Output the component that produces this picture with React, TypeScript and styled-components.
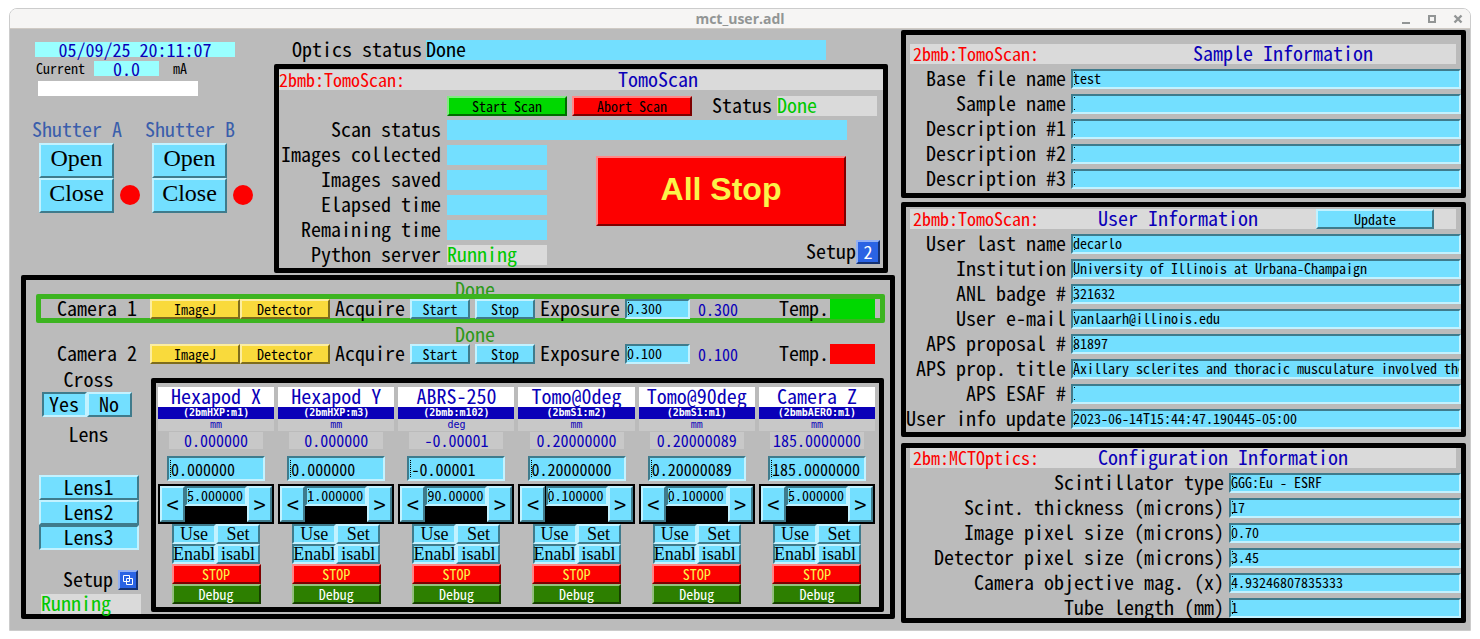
import React from "react";
import styled, { createGlobalStyle, css } from "styled-components";

const color = {
  face: "#bbbbbb",
  cyan: "#73dfff",
  cyanLight: "#c3f2ff",
  cyanDark: "#3f7b8c",
  pale: "#99ffff",
  bar: "#dadada",
  soft: "#c8c8c8",
  navy: "#0a00b8",
  red: "#fd0000",
  green: "#00d800",
  ok: "#00c800",
};

const mono = `"Noto Sans Mono CJK SC", "DejaVu Sans Mono", monospace`;

const GlobalStyle = createGlobalStyle`
  *, *::before, *::after { box-sizing: border-box; }
  body { margin: 0; background: #ffffff; font-family: ${mono}; font-size: 20px; line-height: 18px; color: #000000; }
  button, input, output { font: inherit; color: inherit; margin: 0; }
`;

/* ---------- window frame ---------- */

const Window = styled.div`
  margin: 8px 9px 9px;
  border: 1px solid #cccccc;
  border-radius: 8px 8px 0 0;
  overflow: hidden;
`;

const TitleBar = styled.header`
  display: grid;
  grid-template-columns: 1fr auto 1fr;
  align-items: center;
  height: 20px;
  background: #f6f5f4;
  border-bottom: 1px solid #cfcac4;
`;

const WindowTitle = styled.h1`
  grid-column: 2;
  margin: 0;
  font: bold 14px/18px "Open Sans", sans-serif;
  color: #929595;
`;

const WindowButtons = styled.div`
  display: flex;
  justify-content: flex-end;
  gap: 10px;
  padding-right: 4px;
`;

const WindowButton = styled.button`
  display: flex;
  width: 16px;
  height: 16px;
  padding: 0;
  border: 0;
  background: none;
`;

const Screen = styled.main`
  display: grid;
  grid-template-columns: 885fr 565fr;
  column-gap: 6px;
  padding: 0 4px 7px 0;
  background: ${color.face};
`;

/* ---------- shared parts ---------- */

const raised = (light: string, dark: string) => css`
  border-style: solid;
  border-width: 2px;
  border-color: ${light} ${dark} ${dark} ${light};
`;

const Panel = styled.section`
  border: 5px solid #000000;
  border-radius: 2px;
`;

const tones = {
  cyan: { bg: color.cyan, light: color.cyanLight, dark: color.cyanDark, ink: "#000000" },
  green: { bg: color.green, light: "#80ec80", dark: "#006c00", ink: "#000000" },
  red: { bg: color.red, light: "#ff8888", dark: "#7e0000", ink: "#000000" },
  stop: { bg: color.red, light: "#ff8888", dark: "#7e0000", ink: "#fbf34a" },
  yellow: { bg: "#f9da3c", light: "#fceda0", dark: "#7e6c1c", ink: "#000000" },
  blue: { bg: "#2a63e4", light: "#93b0f2", dark: "#153172", ink: "#ffffff" },
  debug: { bg: "#2d7f00", light: "#96bf80", dark: "#163f00", ink: "#ffffff" },
};

const Button = styled.button<{ $tone?: keyof typeof tones; $w?: number; $h?: number; $size?: number; $down?: boolean }>`
  display: flex;
  align-items: center;
  justify-content: center;
  flex: none;
  padding: 0;
  white-space: nowrap;
  width: ${(p) => (p.$w ? `${p.$w}px` : "100%")};
  height: ${(p) => p.$h ?? 20}px;
  font-size: ${(p) => p.$size ?? 14}px;
  line-height: 16px;
  ${(p) => {
    const t = tones[p.$tone ?? "cyan"];
    return css`
      background: ${t.bg};
      color: ${t.ink};
      ${p.$down ? raised(t.dark, t.light) : raised(t.light, t.dark)}
    `;
  }}
`;

const TallButton = styled(Button)`
  padding-bottom: 2px;
`;

const SerifButton = styled(Button)`
  padding-bottom: 4px;
  font-family: "Liberation Serif", serif;
  line-height: 27px;
`;

const AllStop = styled(Button)`
  padding-bottom: 4px;
  font-family: "Liberation Sans", sans-serif;
  font-weight: bold;
  line-height: 36px;
`;

const Entry = styled.input<{ $w?: number; $big?: boolean }>`
  flex: ${(p) => (p.$w ? "none" : "1")};
  width: ${(p) => (p.$w ? `${p.$w}px` : "auto")};
  min-width: 0;
  height: ${(p) => (p.$big ? 25 : 20)}px;
  padding: 0 0 ${(p) => (p.$big ? 0 : 2)}px ${(p) => (p.$big ? 2 : 0)}px;
  font-size: ${(p) => (p.$big ? 16 : 14)}px;
  color: #000000;
  border-radius: 0;
  outline: none;
  background-color: ${color.cyan};
  background-repeat: no-repeat;
  background-image: ${(p) =>
    p.$big
      ? "repeating-linear-gradient(#000 0 1px, transparent 1px 2px)"
      : "linear-gradient(#000, #000), linear-gradient(#000, #000)"};
  background-size: ${(p) => (p.$big ? "1px 17px" : "1px 1px, 1px 1px")};
  background-position: ${(p) => (p.$big ? "1px 2px" : "1px 1px, 1px 13px")};
  ${raised(color.cyanDark, color.cyanLight)}
`;

const Readout = styled.output<{ $w?: number; $bg?: string; $ink?: string }>`
  display: block;
  flex: none;
  width: ${(p) => p.$w ?? 100}px;
  height: 20px;
  white-space: nowrap;
  background: ${(p) => p.$bg ?? color.cyan};
  color: ${(p) => p.$ink ?? "#000000"};
`;

const Caption = styled.span`
  display: block;
  height: 20px;
  white-space: nowrap;
`;

const Heading = styled.div<{ $lead: number }>`
  display: grid;
  grid-template-columns: ${(p) => p.$lead}px 1fr auto;
  height: 20px;
  color: ${color.navy};
  background: ${color.bar};
`;

const HeadingText = styled.h2`
  margin: 0;
  font: inherit;
`;

const Prefix = styled.span`
  font-size: 18px;
  color: ${color.red};
`;

/* ---------- beam status and shutters ---------- */

const LeftSide = styled.div`
  min-width: 0;
`;

const TopRow = styled.div`
  display: flex;
`;

const BeamStatus = styled.section`
  flex: none;
  width: 264px;
  padding: 13px 0 0 25px;
`;

const PaleReadout = styled.output<{ $w: number }>`
  width: ${(p) => p.$w}px;
  height: 15px;
  font-size: 18px;
  line-height: 14px;
  text-align: center;
  color: ${color.navy};
  background: ${color.pale};
`;

const CurrentRow = styled.div`
  display: grid;
  grid-template-columns: 58px 65px auto;
  height: 15px;
  margin: 4px 0 5px 1px;
  font-size: 14px;
  line-height: 15px;
`;

const Unit = styled.span`
  padding-left: 14px;
`;

const BeamLevel = styled.div`
  width: 160px;
  height: 15px;
  margin-left: 3px;
  background: #ffffff;
`;

const Clock = styled(PaleReadout)`
  display: block;
`;

const Shutters = styled.div`
  display: flex;
  margin-top: 24px;
`;

const Shutter = styled.div`
  width: 113px;
  margin-left: -3px;
  margin-right: 3px;
  color: #3a5eab;
`;

const ShutterBody = styled.div`
  display: flex;
  align-items: flex-end;
  gap: 6px;
  padding: 3px 0 0 7px;
`;

const Lamp = styled.span`
  width: 20px;
  height: 20px;
  margin-bottom: 8px;
  border-radius: 50%;
  background: ${color.red};
`;

/* ---------- scan control ---------- */

const ScanSide = styled.div`
  flex: 1;
  min-width: 0;
  padding: 11px 7px 0 0;
`;

const OpticsRow = styled.div`
  display: flex;
  gap: 4px;
  padding-left: 18px;
  margin-bottom: 4px;
`;

const ScanPanel = styled(Panel)`
  height: 209px;
  padding-top: 1px;
`;

const ScanActions = styled.div`
  display: flex;
  align-items: center;
  gap: 5px;
  margin: 6px 0 4px 168px;
`;

const StatusCaption = styled(Caption)`
  margin-left: 15px;
`;

const ScanRow = styled.div`
  display: grid;
  grid-template-columns: 162px auto;
  justify-content: start;
  column-gap: 6px;
  text-align: right;
`;

const ScanRows = styled.div`
  display: grid;
  gap: 5px;
`;

const ScanBody = styled.div`
  display: flex;
  justify-content: space-between;
  padding-right: 3px;
  margin-top: 5px;
`;

const StopSide = styled.div`
  display: flex;
  flex-direction: column;
  gap: 14px;
  padding-top: 11px;
`;

const SetupRow = styled.div`
  display: flex;
  justify-content: flex-end;
  align-items: center;
`;

const LeftReadout = styled(Readout)`
  text-align: left;
`;

const StopWrap = styled.div`
  padding-right: 34px;
`;

/* ---------- cameras ---------- */

const CameraPanel = styled(Panel)`
  margin: 2px 0 0 11px;
  height: 344px;
`;

const CameraState = styled.div`
  height: 14px;
  padding-left: 429px;
  color: #2d991a;
`;

const CameraRow = styled.div<{ $active?: boolean }>`
  position: relative;
  display: flex;
  align-items: center;
  height: 29px;
  margin: 0 5px 2px 10px;
  padding: 0 5px 0 16px;
  border: 5px solid ${(p) => (p.$active ? "#3cb420" : "transparent")};
  border-radius: 2px;
`;

const CameraName = styled(Caption)`
  width: 93px;
`;

const Gap = styled.div`
  display: flex;
  gap: 5px;
  margin: 0 5px;
`;

const ExposureLabel = styled.label`
  height: 20px;
  margin-right: 5px;
`;

const Narrow = styled.output`
  flex: 1;
  padding-left: 8px;
  font-size: 16px;
  color: ${color.navy};
`;

const TempLamp = styled.span<{ $ok?: boolean }>`
  width: 45px;
  height: 20px;
  margin-left: 1px;
  background: ${(p) => (p.$ok ? color.green : color.red)};
`;

const Lower = styled.div`
  display: grid;
  grid-template-columns: 125px 1fr;
  padding-right: 6px;
`;

const Side = styled.div`
  display: flex;
  flex-direction: column;
  align-items: center;
`;

const YesNo = styled.div`
  display: flex;
  margin: 2px 4px 8px 0;
`;

const LensList = styled.div`
  width: 100px;
  margin: 30px 0 20px;
`;

const SideSetup = styled.div`
  display: flex;
  gap: 5px;
  margin: 0 0 4px 24px;
`;

const SideState = styled(Readout)`
  margin-left: 5px;
`;

/* ---------- motors ---------- */

const MotorPanel = styled(Panel)`
  display: grid;
  grid-template-columns: repeat(6, minmax(0, 1fr));
  column-gap: 4px;
  height: 234px;
  margin-top: 8px;
  padding: 4px 4px 0 2px;
`;

const Motor = styled.div`
  display: flex;
  flex-direction: column;
  align-items: center;
  color: ${color.navy};
`;

const MotorName = styled.h3`
  width: 100%;
  height: 20px;
  margin: 0;
  font: inherit;
  text-align: center;
  background: #ffffff;
`;

const MotorTag = styled.div<{ $plain?: boolean }>`
  width: 100%;
  height: 12px;
  font: ${(p) => (p.$plain ? "normal" : "bold")} 10px/12px "DejaVu Sans Mono", monospace;
  text-align: center;
  color: ${(p) => (p.$plain ? color.navy : "#ffffff")};
  background: ${(p) => (p.$plain ? color.soft : color.navy)};
`;

const MotorValue = styled.output`
  width: 94px;
  height: 17px;
  margin: 1px 0 7px;
  font-size: 16px;
  line-height: 16px;
  text-align: center;
  background: ${color.soft};
`;

const Tweak = styled.div`
  display: flex;
  justify-content: space-between;
  width: 100%;
  height: 40px;
  margin-top: 3px;
  padding: 2px;
  background: #000000;
`;

const MotorKeys = styled.div`
  display: grid;
  grid-template-columns: 44px 44px;
  width: 88px;
`;

const MotorKey = styled(Button)`
  font-family: "Liberation Serif", serif;
`;

/* ---------- information forms ---------- */

const RightSide = styled.div`
  min-width: 0;
  padding-top: 1px;
`;

const InfoPanel = styled(Panel)<{ $top: number; $bottom: number; $after: number }>`
  padding: ${(p) => p.$top}px 0 ${(p) => p.$bottom}px;
  margin-bottom: ${(p) => p.$after}px;
`;

const InfoHeading = styled(Heading)`
  margin: 0 5px 0 4px;
  padding: 0 22px 0 3px;
`;

const Fields = styled.div<{ $label: number }>`
  display: grid;
  gap: 5px;
  margin-top: 5px;
  --label: ${(p) => p.$label}px;
`;

const Field = styled.div`
  display: grid;
  grid-template-columns: var(--label) minmax(0, 1fr);
  column-gap: 5px;
`;

const FieldLabel = styled.label`
  height: 20px;
  text-align: right;
  white-space: nowrap;
`;

/* ---------- data ---------- */

const motors = [
  { name: "Hexapod X", pv: "(2bmHXP:m1)", unit: "mm", value: "0.000000", set: "0.000000", step: "5.000000" },
  { name: "Hexapod Y", pv: "(2bmHXP:m3)", unit: "mm", value: "0.000000", set: "0.000000", step: "1.000000" },
  { name: "ABRS-250", pv: "(2bmb:m102)", unit: "deg", value: "-0.00001", set: "-0.00001", step: "90.00000" },
  { name: "Tomo@0deg", pv: "(2bmS1:m2)", unit: "mm", value: "0.20000000", set: "0.20000000", step: "0.100000" },
  { name: "Tomo@90deg", pv: "(2bmS1:m1)", unit: "mm", value: "0.20000089", set: "0.20000089", step: "0.100000" },
  { name: "Camera Z", pv: "(2bmbAERO:m1)", unit: "mm", value: "185.0000000", set: "185.0000000", step: "5.000000" },
];

const sample: [string, string][] = [
  ["Base file name", "test"],
  ["Sample name", ""],
  ["Description #1", ""],
  ["Description #2", ""],
  ["Description #3", ""],
];

const user: [string, string][] = [
  ["User last name", "decarlo"],
  ["Institution", "University of Illinois at Urbana-Champaign"],
  ["ANL badge #", "321632"],
  ["User e-mail", "vanlaarh@illinois.edu"],
  ["APS proposal #", "81897"],
  ["APS prop. title", "Axillary sclerites and thoracic musculature involved the"],
  ["APS ESAF #", ""],
  ["User info update", "2023-06-14T15:44:47.190445-05:00"],
];

const config: [string, string][] = [
  ["Scintillator type", "GGG:Eu - ESRF"],
  ["Scint. thickness (microns)", "17"],
  ["Image pixel size (microns)", "0.70"],
  ["Detector pixel size (microns)", "3.45"],
  ["Camera objective mag. (x)", "4.93246807835333"],
  ["Tube length (mm)", "1"],
];

/* ---------- components ---------- */

function FieldList({ id, label, rows }: { id: string; label: number; rows: [string, string][] }) {
  return (
    <Fields $label={label}>
      {rows.map(([name, value], i) => (
        <Field key={name}>
          <FieldLabel htmlFor={`${id}-${i}`}>{name}</FieldLabel>
          <Entry id={`${id}-${i}`} defaultValue={value} spellCheck={false} />
        </Field>
      ))}
    </Fields>
  );
}

function ShutterControl({ name }: { name: string }) {
  return (
    <Shutter>
      <Caption>{name}</Caption>
      <ShutterBody>
        <div>
          <SerifButton $w={75} $h={35} $size={24}>Open</SerifButton>
          <SerifButton $w={75} $h={35} $size={24}>Close</SerifButton>
        </div>
        <Lamp />
      </ShutterBody>
    </Shutter>
  );
}

function Camera({ n, exposure, active }: { n: number; exposure: string; active?: boolean }) {
  return (
    <>
      <CameraState>Done</CameraState>
      <CameraRow $active={active}>
        <CameraName>Camera {n}</CameraName>
        <Button $tone="yellow" $w={90}>ImageJ</Button>
        <Button $tone="yellow" $w={90}>Detector</Button>
        <Gap>
          <Caption>Acquire</Caption>
          <Button $w={60}>Start</Button>
          <Button $w={60}>Stop</Button>
        </Gap>
        <ExposureLabel htmlFor={`exposure-${n}`}>Exposure</ExposureLabel>
        <Entry id={`exposure-${n}`} $w={65} defaultValue={exposure} />
        <Narrow>{exposure}</Narrow>
        <Caption>Temp.</Caption>
        <TempLamp $ok={active} />
      </CameraRow>
    </>
  );
}

function MotorColumn({ m }: { m: (typeof motors)[number] }) {
  return (
    <Motor>
      <MotorName>{m.name}</MotorName>
      <MotorTag>{m.pv}</MotorTag>
      <MotorTag $plain>{m.unit}</MotorTag>
      <MotorValue>{m.value}</MotorValue>
      <Entry $w={98} $big aria-label={`${m.name} position`} defaultValue={m.set} />
      <Tweak>
        <Button $w={25} $h={36} $size={24} aria-label={`${m.name} back`}>&lt;</Button>
        <Entry $w={62} aria-label={`${m.name} step`} defaultValue={m.step} />
        <Button $w={25} $h={36} $size={24} aria-label={`${m.name} forward`}>&gt;</Button>
      </Tweak>
      <MotorKeys>
        <MotorKey $size={18} $down>Use</MotorKey>
        <MotorKey $size={18}>Set</MotorKey>
        <MotorKey $size={18} $down>Enabl</MotorKey>
        <MotorKey $size={18}>isabl</MotorKey>
      </MotorKeys>
      <Button $tone="stop" $w={89}>STOP</Button>
      <Button $tone="debug" $w={89}>Debug</Button>
    </Motor>
  );
}

export default function App() {
  return (
    <>
      <GlobalStyle />
      <Window>
        <TitleBar>
          <WindowTitle>mct_user.adl</WindowTitle>
          <WindowButtons>
            <WindowButton aria-label="Minimize">
              <svg width="16" height="16" viewBox="0 0 16 16"><path d="M4 12h8" stroke="#929595" strokeWidth="2" /></svg>
            </WindowButton>
            <WindowButton aria-label="Maximize">
              <svg width="16" height="16" viewBox="0 0 16 16"><path d="M5 5h6v6h-6z" fill="none" stroke="#929595" strokeWidth="2" /></svg>
            </WindowButton>
            <WindowButton aria-label="Close">
              <svg width="16" height="16" viewBox="0 0 16 16"><path d="M4.500 4.500l7 7M11.500 4.500l-7 7" stroke="#929595" strokeWidth="2.400" /></svg>
            </WindowButton>
          </WindowButtons>
        </TitleBar>

        <Screen>
          <LeftSide>
            <TopRow>
              <BeamStatus>
                <Clock $w={200}>05/09/25 20:11:07</Clock>
                <CurrentRow>
                  <span>Current</span>
                  <PaleReadout $w={65}>0.0</PaleReadout>
                  <Unit>mA</Unit>
                </CurrentRow>
                <BeamLevel />
                <Shutters>
                  <ShutterControl name="Shutter A" />
                  <ShutterControl name="Shutter B" />
                </Shutters>
              </BeamStatus>

              <ScanSide>
                <OpticsRow>
                  <Caption>Optics status</Caption>
                  <Readout $w={400}>Done</Readout>
                </OpticsRow>
                <ScanPanel>
                  <Heading $lead={339}>
                    <Prefix>2bmb:TomoScan:</Prefix>
                    <HeadingText>TomoScan</HeadingText>
                  </Heading>
                  <ScanActions>
                    <Button $tone="green" $w={120}>Start Scan</Button>
                    <Button $tone="red" $w={120}>Abort Scan</Button>
                    <StatusCaption>Status</StatusCaption>
                    <Readout $bg={color.bar} $ink={color.ok}>Done</Readout>
                  </ScanActions>
                  <ScanRow>
                    <Caption>Scan status</Caption>
                    <Readout $w={400} />
                  </ScanRow>
                  <ScanBody>
                    <ScanRows>
                      {["Images collected", "Images saved", "Elapsed time", "Remaining time"].map((t) => (
                        <ScanRow key={t}>
                          <Caption>{t}</Caption>
                          <Readout />
                        </ScanRow>
                      ))}
                      <ScanRow>
                        <Caption>Python server</Caption>
                        <LeftReadout $bg={color.bar} $ink={color.ok}>Running</LeftReadout>
                      </ScanRow>
                    </ScanRows>
                    <StopSide>
                      <StopWrap>
                        <AllStop $tone="stop" $w={250} $h={70} $size={32}>All Stop</AllStop>
                      </StopWrap>
                      <SetupRow>
                        <Caption>Setup</Caption>
                        <TallButton $tone="blue" $w={24} $h={24} $size={18}>2</TallButton>
                      </SetupRow>
                    </StopSide>
                  </ScanBody>
                </ScanPanel>
              </ScanSide>
            </TopRow>

            <CameraPanel>
              <Camera n={1} exposure="0.300" active />
              <Camera n={2} exposure="0.100" />
              <Lower>
                <Side>
                  <Caption>Cross</Caption>
                  <YesNo>
                    <TallButton $w={45} $h={25} $size={20} $down aria-pressed>Yes</TallButton>
                    <TallButton $w={45} $h={25} $size={20}>No</TallButton>
                  </YesNo>
                  <Caption>Lens</Caption>
                  <LensList>
                    <TallButton $h={25} $size={20}>Lens1</TallButton>
                    <TallButton $h={25} $size={20}>Lens2</TallButton>
                    <TallButton $h={25} $size={20} $down aria-pressed>Lens3</TallButton>
                  </LensList>
                  <SideSetup>
                    <Caption>Setup</Caption>
                    <Button $tone="blue" $w={20} aria-label="Open optics setup">
                      <svg width="12" height="12" viewBox="0 0 12 12" fill="none" stroke="#ffffff" strokeWidth="1">
                        <path d="M1.500 1.500h6v6h-6z M4.500 4.500h6v6h-6z" />
                      </svg>
                    </Button>
                  </SideSetup>
                  <SideState $bg={color.bar} $ink={color.ok}>Running</SideState>
                </Side>
                <MotorPanel>
                  {motors.map((m) => (
                    <MotorColumn key={m.name} m={m} />
                  ))}
                </MotorPanel>
              </Lower>
            </CameraPanel>
          </LeftSide>

          <RightSide>
            <InfoPanel $top={9} $bottom={4} $after={4}>
              <InfoHeading $lead={280}>
                <Prefix>2bmb:TomoScan:</Prefix>
                <HeadingText>Sample Information</HeadingText>
              </InfoHeading>
              <FieldList id="sample" label={160} rows={sample} />
            </InfoPanel>
            <InfoPanel $top={2} $bottom={3} $after={6}>
              <InfoHeading $lead={185}>
                <Prefix>2bmb:TomoScan:</Prefix>
                <HeadingText>User Information</HeadingText>
                <Button $w={118}>Update</Button>
              </InfoHeading>
              <FieldList id="user" label={160} rows={user} />
            </InfoPanel>
            <InfoPanel $top={0} $bottom={0} $after={0}>
              <InfoHeading $lead={185}>
                <Prefix>2bm:MCTOptics:</Prefix>
                <HeadingText>Configuration Information</HeadingText>
              </InfoHeading>
              <FieldList id="config" label={318} rows={config} />
            </InfoPanel>
          </RightSide>
        </Screen>
      </Window>
    </>
  );
}
